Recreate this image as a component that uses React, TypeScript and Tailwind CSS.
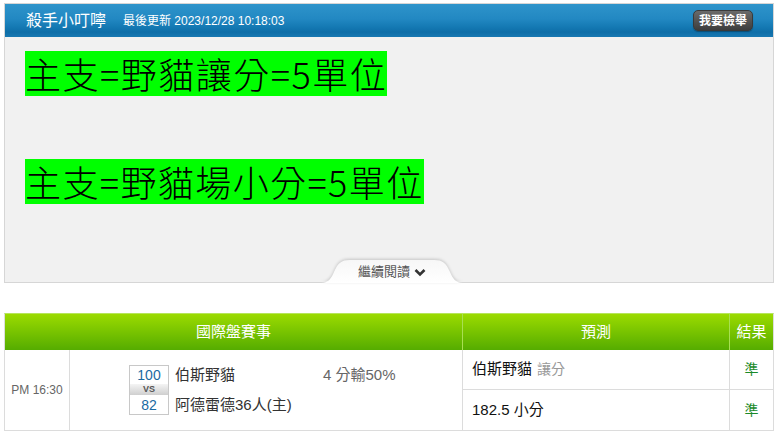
import React from "react";

const FONT = '"Liberation Sans", "Noto Sans CJK TC", sans-serif';
const CJK = '"Noto Sans CJK TC", sans-serif';

function Tab() {
  return (
    <div className="absolute left-[316px] bottom-[-1px] w-[142px] h-[25px]">
      <svg width="142" height="25" viewBox="0 0 142 25" className="absolute inset-0" style={{ filter: "drop-shadow(0 -1px 1.5px rgba(0,0,0,0.18))" }}>
        <defs>
          <linearGradient id="tabg" x1="0" y1="0" x2="0" y2="1">
            <stop offset="0" stopColor="#f7f7f7" />
            <stop offset="1" stopColor="#ffffff" />
          </linearGradient>
        </defs>
        <path d="M0 25 C7 25 10 21 13 14 C17 5 20 2 29 2 L113 2 C122 2 125 5 129 14 C132 21 135 25 142 25 Z" fill="url(#tabg)" />
      </svg>
      <div className="relative flex items-center justify-center h-full pt-[3px] gap-[4px] text-[13px] text-[#555]">
        <span>繼續閱讀</span>
        <svg width="12" height="9" viewBox="0 0 12 9">
          <path d="M1.5 2 L6 6.5 L10.5 2" fill="none" stroke="#333" strokeWidth="2.6" />
        </svg>
      </div>
    </div>
  );
}

export default function App() {
  return (
    <div className="bg-white w-[778px] h-[434px] overflow-hidden" style={{ fontFamily: FONT }}>
      <div className="pt-[3px] pl-[4px]">
        <div className="relative w-[770px] h-[280px] border border-[#d6d6d6] bg-[#f1f1f1]">
          <div className="h-[33px] flex items-center pl-[21px] pr-[20px] bg-[linear-gradient(to_bottom,#2e94cb_0%,#2288c2_45%,#1479b3_70%,#0e6ea8_85%,#1878b2_100%)]">
            <span className="text-[16px] text-white">殺手小叮嚀</span>
            <span className="ml-[17px] text-[12px] text-white">最後更新 2023/12/28 10:18:03</span>
            <div className="ml-auto h-[21px] w-[60px] rounded-[5px] border border-[#3a3a3a] bg-[linear-gradient(to_bottom,#6a6a6a,#3d3d3d)] flex items-center justify-center text-[12px] text-white font-bold shadow-[0_1px_1px_rgba(0,0,0,0.3)]">
              我要檢舉
            </div>
          </div>
          <div className="pl-[20px] pt-[14px]" style={{ fontFamily: CJK }}>
            <div>
              <span className="inline-block bg-[#00ff00] text-black font-light text-[36px] leading-[45px] h-[45px] tracking-[1.5px]">主支=野貓讓分=5單位</span>
            </div>
            <div className="mt-[63px]">
              <span className="inline-block bg-[#00ff00] text-black font-light text-[36px] leading-[45px] h-[45px] tracking-[1.4px]">主支=野貓場小分=5單位</span>
            </div>
          </div>
          <Tab />
        </div>
      </div>

      <div className="mt-[30px] ml-[4px] w-[770px] border border-[#dcdcdc] border-t-[#b6e55a]">
        <div className="flex h-[36px] bg-[linear-gradient(to_bottom,#9bdb00,#55ac00)] text-white text-[15px]">
          <div className="w-[457px] flex items-center justify-center">國際盤賽事</div>
          <div className="w-[267px] border-l border-[#a8df52] flex items-center justify-center">預測</div>
          <div className="flex-1 border-l border-[#a8df52] flex items-center justify-center">結果</div>
        </div>
        <div className="flex h-[80px]">
          <div className="w-[64px] flex items-center justify-center text-[12px] text-[#666]">PM 16:30</div>
          <div className="w-[393px] border-l border-[#dcdcdc] flex items-center pl-[59px]">
            <div className="w-[40px] h-[50px] border border-[#c8c8c8] flex flex-col text-[#1a6aa2] text-[14px]">
              <div className="h-[18px] flex items-center justify-center leading-none">100</div>
              <div className="h-[11px] flex items-center justify-center text-[9px] font-bold text-[#555] bg-[linear-gradient(to_bottom,#f4f4f4,#cfcfcf)] leading-none">VS</div>
              <div className="flex-1 flex items-center justify-center leading-none">82</div>
            </div>
            <div className="ml-[6px] flex flex-col justify-between h-[50px] text-[15px] text-[#333]">
              <div className="flex items-center h-[20px]">
                <span className="w-[148px]">伯斯野貓</span>
                <span className="text-[#666]">4 分輸50%</span>
              </div>
              <div className="flex items-center h-[20px]">阿德雷德36人(主)</div>
            </div>
          </div>
          <div className="flex-1 border-l border-[#dcdcdc] flex flex-col">
            <div className="flex h-[40px] border-b border-[#dcdcdc]">
              <div className="w-[266px] flex items-center pl-[9px] text-[15px] text-[#111]">
                伯斯野貓<span className="ml-[5px] text-[14px] text-[#999]">讓分</span>
              </div>
              <div className="flex-1 border-l border-[#dcdcdc] flex items-center justify-center text-[14px] text-[#1a8a2a]">準</div>
            </div>
            <div className="flex flex-1">
              <div className="w-[266px] flex items-center pl-[9px] text-[15px] text-[#111]">182.5 小分</div>
              <div className="flex-1 border-l border-[#dcdcdc] flex items-center justify-center text-[14px] text-[#1a8a2a]">準</div>
            </div>
          </div>
        </div>
      </div>
    </div>
  );
}
